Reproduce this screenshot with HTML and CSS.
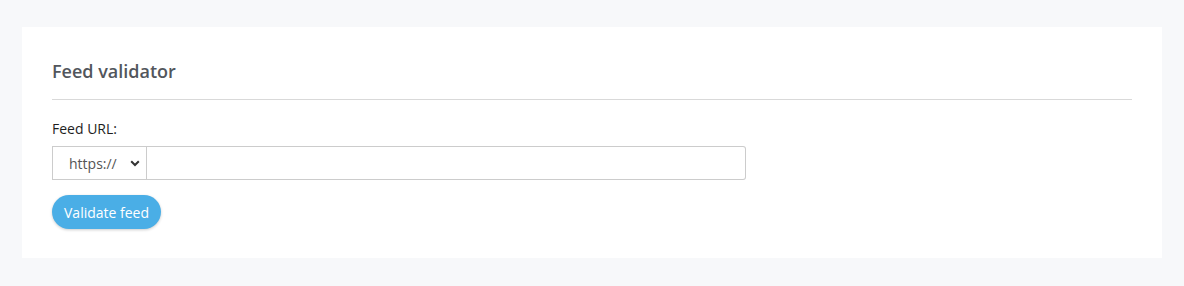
FILE: index.html
```html
<!DOCTYPE html>
<html>
<head>
<meta charset="utf-8">
<link rel="stylesheet" href="styles.css">
</head>
<body>
<div class="card">
  <h2 class="title">Feed validator</h2>
  <hr class="rule">
  <form class="form">
    <label class="label" for="url">Feed URL:</label>
    <div class="group">
      <div class="select">
        <span class="select-text">https://</span>
        <svg class="chev" width="10" height="7" viewBox="0 0 10 7"><path d="M1.2 1.2 L5 5 L8.8 1.2" fill="none" stroke="#333" stroke-width="2"/></svg>
      </div>
      <input class="input" id="url" type="text">
    </div>
    <div class="actions">
      <button class="btn" type="button">Validate feed</button>
    </div>
  </form>
</div>
</body>
</html>
```
FILE: styles.css
```css
html, body {
  margin: 0;
  padding: 0;
  background: #f7f8fa;
  font-family: "Open Sans", "Liberation Sans", sans-serif;
}
body {
  padding: 27px 22px 28px 22px;
}
.card {
  background: #fff;
  padding: 24px 30px 29px 30px;
}
.title {
  margin: 0;
  font-size: 18px;
  font-weight: 600;
  color: #52565c;
  line-height: 40px;
}
.rule {
  margin: 8px 0 0 0;
  border: 0;
  border-top: 1px solid #d9d9d9;
  height: 0;
}
.form {
  display: flex;
  flex-direction: column;
  padding-top: 20px;
}
.label {
  font-size: 14px;
  font-weight: 400;
  color: #1e1e1e;
  line-height: 18px;
  margin-bottom: 8px;
}
.group {
  display: flex;
  width: 694px;
  height: 34px;
}
.select {
  box-sizing: border-box;
  width: 95px;
  height: 34px;
  border: 1px solid #ccc;
  display: flex;
  align-items: center;
  padding: 0 0 0 16px;
  font-size: 14px;
  color: #555;
}
.select-text {
  flex: 1;
}
.chev {
  margin-right: 6px;
}
.input {
  box-sizing: border-box;
  flex: 1;
  height: 34px;
  border: 1px solid #ccc;
  border-left: 0;
  border-radius: 0 3px 3px 0;
  margin: 0;
  padding: 0 8px;
  outline: none;
}
.actions {
  padding-top: 15px;
}
.btn {
  background: #4aaee6;
  color: #fff;
  border: 0;
  border-radius: 17px;
  height: 34px;
  padding: 0 12px;
  font-family: "Open Sans", "Liberation Sans", sans-serif;
  font-size: 14px;
  font-weight: 400;
  box-shadow: 0 1px 3px rgba(0,0,0,0.2);
  cursor: pointer;
}
```
